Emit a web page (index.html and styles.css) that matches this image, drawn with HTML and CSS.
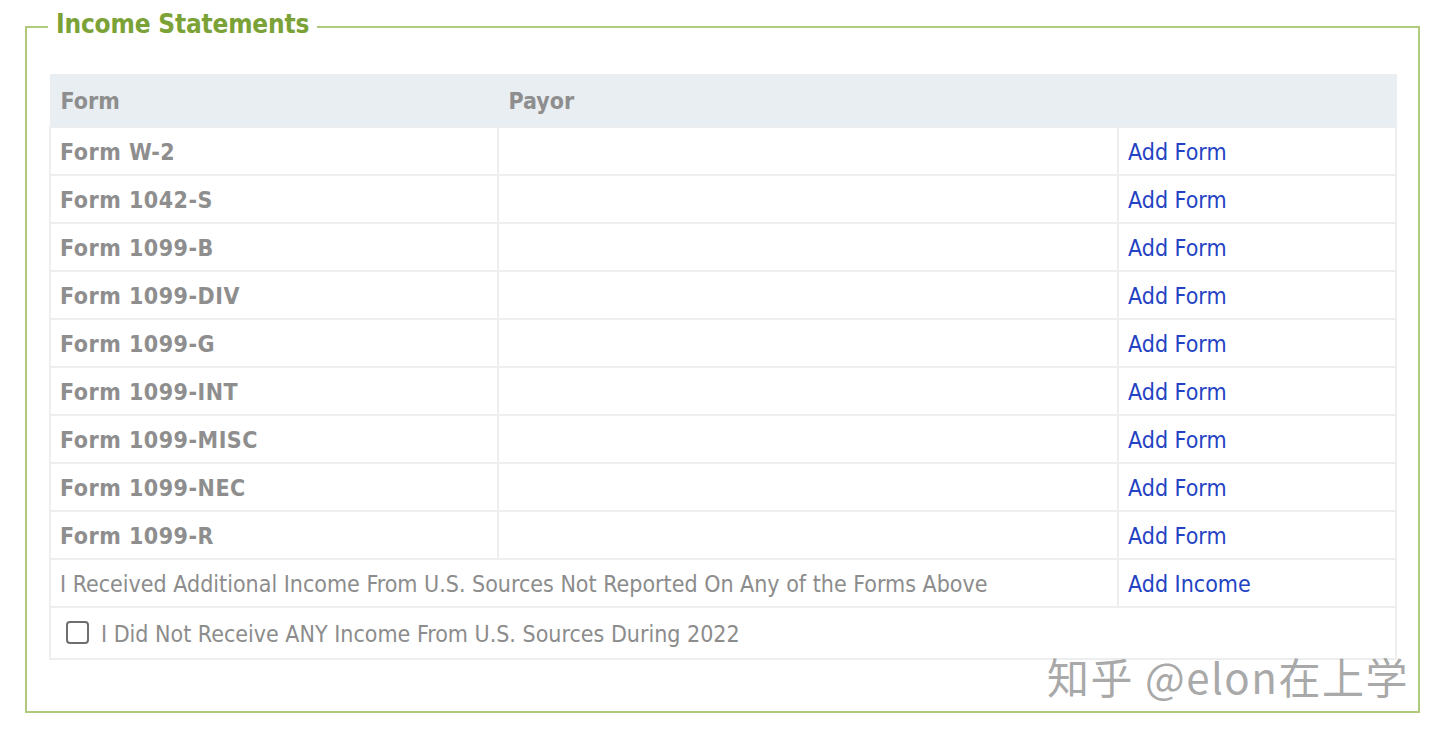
FILE: index.html
```html
<!DOCTYPE html>
<html>
<head>
<meta charset="utf-8">
<link rel="stylesheet" href="styles.css">
</head>
<body>
<div class="page">
  <fieldset class="box">
    <legend class="box-title">Income Statements</legend>
    <table class="forms">
      <colgroup>
        <col class="c-form">
        <col class="c-payor">
        <col class="c-action">
      </colgroup>
      <thead>
        <tr class="head">
          <th>Form</th>
          <th>Payor</th>
          <th></th>
        </tr>
      </thead>
      <tbody>
        <tr><td class="name">Form W-2</td><td></td><td><a class="link" href="#">Add Form</a></td></tr>
        <tr><td class="name">Form 1042-S</td><td></td><td><a class="link" href="#">Add Form</a></td></tr>
        <tr><td class="name">Form 1099-B</td><td></td><td><a class="link" href="#">Add Form</a></td></tr>
        <tr><td class="name">Form 1099-DIV</td><td></td><td><a class="link" href="#">Add Form</a></td></tr>
        <tr><td class="name">Form 1099-G</td><td></td><td><a class="link" href="#">Add Form</a></td></tr>
        <tr><td class="name">Form 1099-INT</td><td></td><td><a class="link" href="#">Add Form</a></td></tr>
        <tr><td class="name">Form 1099-MISC</td><td></td><td><a class="link" href="#">Add Form</a></td></tr>
        <tr><td class="name">Form 1099-NEC</td><td></td><td><a class="link" href="#">Add Form</a></td></tr>
        <tr><td class="name">Form 1099-R</td><td></td><td><a class="link" href="#">Add Form</a></td></tr>
        <tr><td colspan="2" class="plain">I Received Additional Income From U.S. Sources Not Reported On Any of the Forms Above</td><td><a class="link" href="#">Add Income</a></td></tr>
        <tr class="check-row">
          <td colspan="3">
            <label class="check">
              <span class="box-check"></span>
              <span>I Did Not Receive ANY Income From U.S. Sources During 2022</span>
            </label>
          </td>
        </tr>
      </tbody>
    </table>
  </fieldset>
  <div class="watermark">知乎 @elon在上学</div>
</div>
</body>
</html>
```

FILE: styles.css
```css
html, body {
  margin: 0;
  padding: 0;
  background: #ffffff;
}

body {
  font-family: "DejaVu Sans Condensed", "DejaVu Sans", sans-serif;
  color: #8c8c8c;
}

.page {
  position: relative;
  width: 1440px;
  height: 733px;
  padding-top: 10px;
  box-sizing: border-box;
}

.box {
  margin: 0 0 0 25px;
  width: 1395px;
  box-sizing: border-box;
  border: 2px solid #b1c97a;
  padding: 30px 23px 51px 22px;
  min-width: 0;
}

.box-title {
  margin-left: -1px;
  padding: 0 8px 6px 8px;
  color: #7ba237;
  font-size: 26px;
  font-weight: bold;
  line-height: 28px;
  letter-spacing: -0.2px;
}

.forms {
  width: 1346px;
  border-collapse: collapse;
  table-layout: fixed;
  font-size: 23px;
}

.c-form { width: 448px; }
.c-payor { width: 620px; }
.c-action { width: 278px; }

.head th {
  background: #e9eef2;
  height: 52px;
  padding: 2px 10px 0 10px;
  text-align: left;
  font-weight: bold;
  color: #8e8e8e;
  border: 1px solid #e9eef2;
  box-sizing: border-box;
}

.forms td {
  height: 48px;
  padding: 2px 9px 0 9px;
  border: 2px solid #eceef0;
  box-sizing: border-box;
  vertical-align: middle;
}

.name {
  font-weight: bold;
  color: #8e8e8e;
  letter-spacing: 0.5px;
}

.plain {
  color: #8c8c8c;
}

.link {
  color: #2443c4;
  text-decoration: none;
}

.check-row td {
  height: 52px;
  padding: 3px 15px 0 15px;
}

.check {
  display: flex;
  align-items: center;
  gap: 12px;
}

.box-check {
  width: 19px;
  height: 19px;
  border: 2px solid #6e6e6e;
  border-radius: 4px;
  background: #fff;
  flex: none;
  margin-top: -4px;
}

.watermark {
  position: absolute;
  left: 1047px;
  top: 645px;
  font-family: "Noto Sans CJK SC", "DejaVu Sans", sans-serif;
  font-size: 42px;
  color: rgba(145, 145, 145, 0.8);
  text-shadow: 1px 1px 0 rgba(255,255,255,0.9);
  letter-spacing: 1.5px;
  white-space: nowrap;
}
```
